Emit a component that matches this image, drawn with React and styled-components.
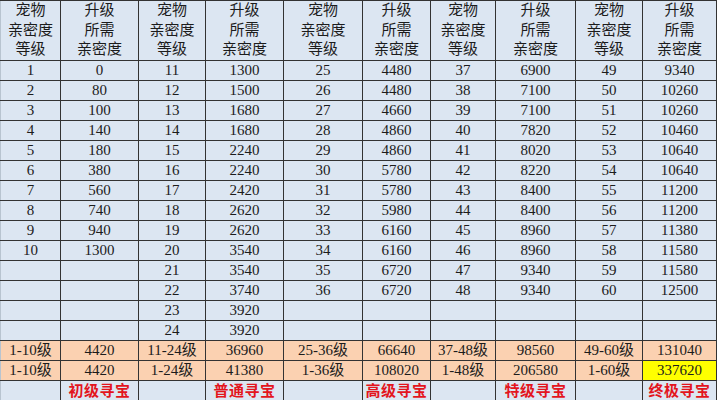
import React from "react";
import styled, { createGlobalStyle } from "styled-components";

const Global = createGlobalStyle`
  html, body { margin: 0; padding: 0; background: #ffffff; }
  body { width: 720px; }
`;

const Table = styled.table`
  border-collapse: collapse;
  table-layout: fixed;
  width: 716px;
  font-family: "Liberation Serif", "Noto Sans CJK SC", serif;
  font-size: 15px;
  color: #1c1c1c;
`;

const HeadRow = styled.tr`
  height: 59px;
`;

const Row = styled.tr`
  height: 20px;
`;

const Cell = styled.td`
  border: 1px solid #333333;
  border-left-color: ${(p) => (p.$first ? "#b8c4d0" : "#333333")};
  background: ${(p) => p.$bg || "#dce6f2"};
  text-align: center;
  vertical-align: middle;
  padding: 0;
  line-height: 19px;
  white-space: nowrap;
  overflow: visible;
`;

const HeadCell = styled(Cell)`
  line-height: 19.5px;
`;

const PrizeCell = styled(Cell)`
  border-bottom: none;
  line-height: 16px;
`;

const Prize = styled.span`
  display: inline-block;
  color: #e3151d;
  font-weight: 700;
  font-family: "Noto Sans CJK SC", sans-serif;
  font-size: 15px;
  line-height: 16px;
  letter-spacing: 0.5px;
`;

const widths = [60, 78, 67, 78, 79, 68, 65, 80, 67, 74];

const cols = [
  [1, 2, 3, 4, 5, 6, 7, 8, 9, 10],
  [0, 80, 100, 140, 180, 380, 560, 740, 940, 1300],
  [11, 12, 13, 14, 15, 16, 17, 18, 19, 20, 21, 22, 23, 24],
  [1300, 1500, 1680, 1680, 2240, 2240, 2420, 2620, 2620, 3540, 3540, 3740, 3920, 3920],
  [25, 26, 27, 28, 29, 30, 31, 32, 33, 34, 35, 36],
  [4480, 4480, 4660, 4860, 4860, 5780, 5780, 5980, 6160, 6160, 6720, 6720],
  [37, 38, 39, 40, 41, 42, 43, 44, 45, 46, 47, 48],
  [6900, 7100, 7100, 7820, 8020, 8220, 8400, 8400, 8960, 8960, 9340, 9340],
  [49, 50, 51, 52, 53, 54, 55, 56, 57, 58, 59, 60],
  [9340, 10260, 10260, 10460, 10640, 10640, 11200, 11200, 11380, 11580, 11580, 12500],
];

const sum1 = ["1-10级", "4420", "11-24级", "36960", "25-36级", "66640", "37-48级", "98560", "49-60级", "131040"];
const sum2 = ["1-10级", "4420", "1-24级", "41380", "1-36级", "108020", "1-48级", "206580", "1-60级", "337620"];
const prizes = ["", "初级寻宝", "", "普通寻宝", "", "高级寻宝", "", "特级寻宝", "", "终极寻宝"];

const ORANGE = "#fbd1b1";
const YELLOW = "#ffff00";

export default function App() {
  const rows = Array.from({ length: 14 }, (_, r) => r);
  return (
    <>
      <Global />
      <Table>
        <colgroup>
          {widths.map((w, i) => (
            <col key={i} style={{ width: w }} />
          ))}
        </colgroup>
        <tbody>
          <HeadRow>
            {widths.map((_, i) => (
              <HeadCell key={i} $first={i === 0}>
                {i % 2 === 0 ? (
                  <>宠物<br />亲密度<br />等级</>
                ) : (
                  <>升级<br />所需<br />亲密度</>
                )}
              </HeadCell>
            ))}
          </HeadRow>
          {rows.map((r) => (
            <Row key={r}>
              {cols.map((c, i) => (
                <Cell key={i} $first={i === 0}>
                  {c[r] !== undefined ? c[r] : ""}
                </Cell>
              ))}
            </Row>
          ))}
          <Row>
            {sum1.map((t, i) => (
              <Cell key={i} $first={i === 0} $bg={ORANGE}>
                {t}
              </Cell>
            ))}
          </Row>
          <Row>
            {sum2.map((t, i) => (
              <Cell key={i} $first={i === 0} $bg={i === 9 ? YELLOW : ORANGE}>
                {t}
              </Cell>
            ))}
          </Row>
          <Row>
            {prizes.map((t, i) => (
              <PrizeCell key={i} $first={i === 0}>
                {t && <Prize>{t}</Prize>}
              </PrizeCell>
            ))}
          </Row>
        </tbody>
      </Table>
    </>
  );
}
